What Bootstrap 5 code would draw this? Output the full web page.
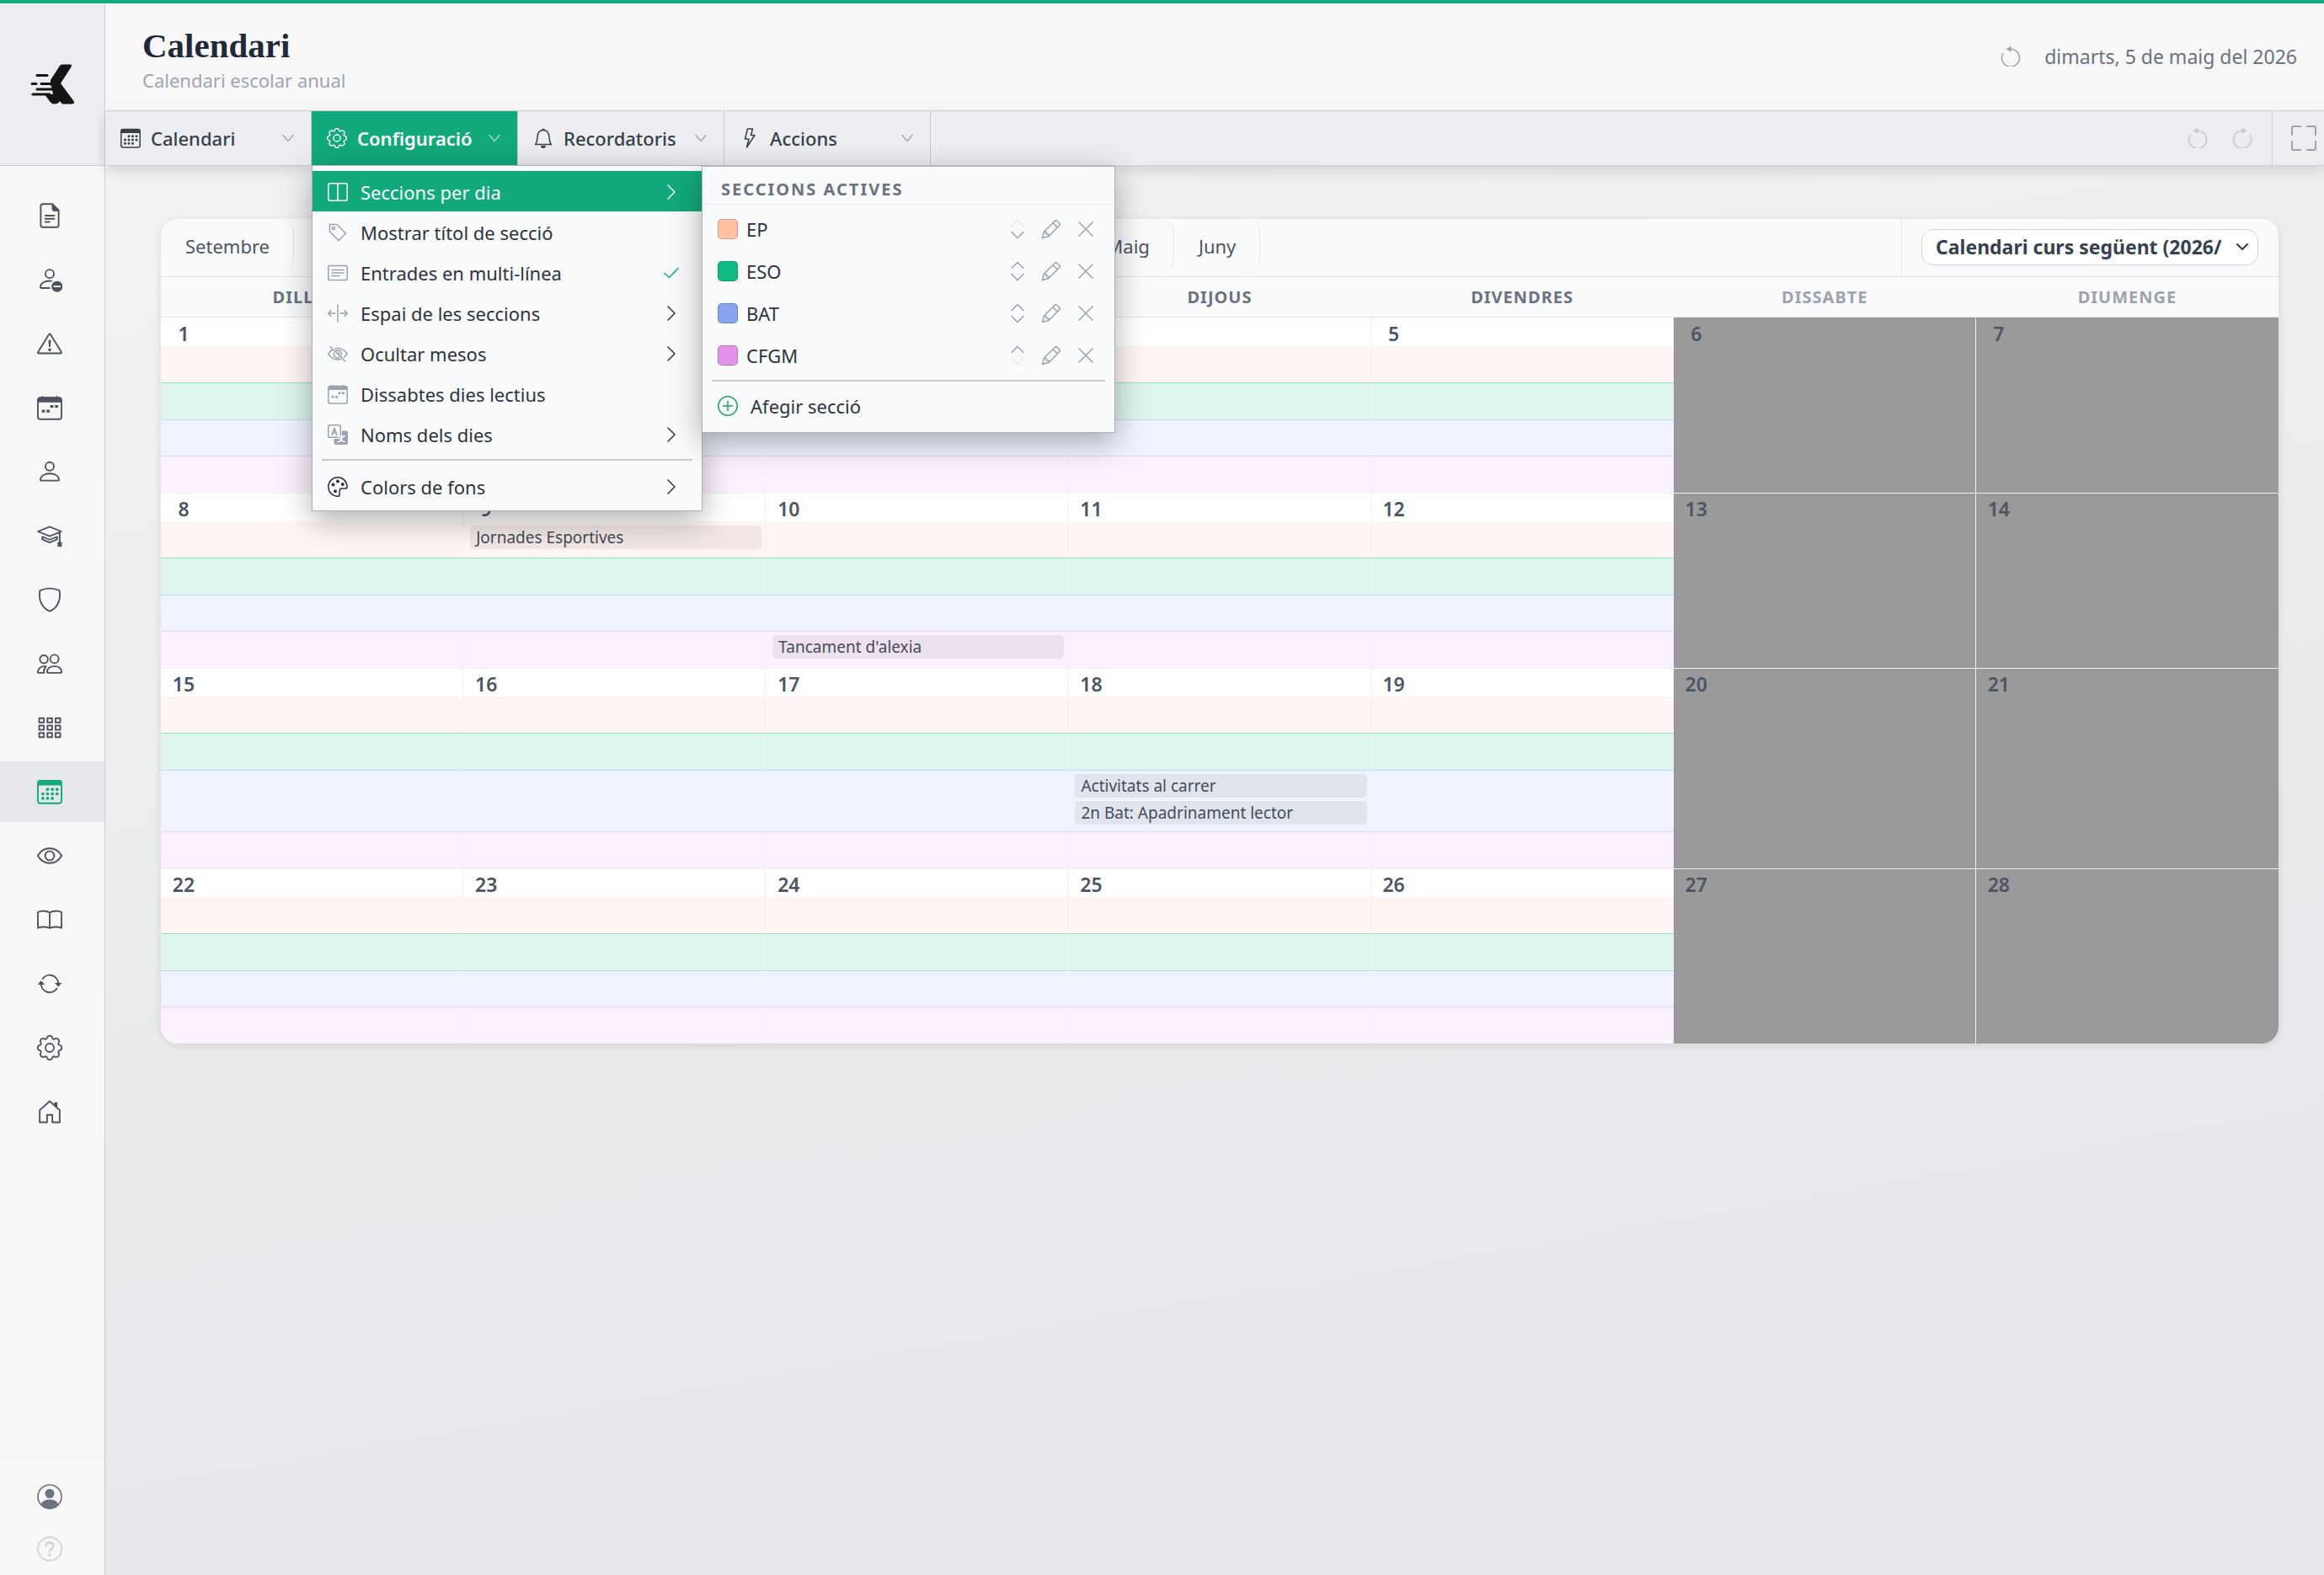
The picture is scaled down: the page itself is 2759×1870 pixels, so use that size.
<!DOCTYPE html>
<html lang="ca">
<head>
<meta charset="utf-8">
<meta name="viewport" content="width=device-width, initial-scale=1">
<title>Calendari</title>
<link href="https://cdn.jsdelivr.net/npm/bootstrap@5.3.0/dist/css/bootstrap.min.css" rel="stylesheet">
<style>
  :root { --brand:#12a97c; --ink:#374151; --line:#cbced4; --panel:#f8fafc; }
  body { font-family:"Noto Sans","Open Sans",sans-serif; font-size:22px; line-height:30px; color:#2f343d; background:#f7f7f7; }
  svg { flex:none; fill:none; stroke:currentColor; stroke-width:1.5; stroke-linecap:round; stroke-linejoin:round; }
  .solid { fill:currentColor; stroke:none; }
  .ico { width:24px; height:24px; }
  .ico-lg { width:30px; height:30px; }
  button { color:inherit; }
  .bare { border:0; background:none; padding:0; line-height:0; }

  .shell { min-height:100vh; border-top:4px solid var(--brand); }
  .rail { width:125px; border-right:1px solid var(--line); background:#f7f7f7; color:#4b5260; }
  .brand-box { height:193px; background:#ecedf0; border-bottom:1px solid var(--line); padding-left:2px; }
  .rail-nav { padding-top:23px; gap:4px; }
  .rail-link { height:72px; padding-right:6px; color:inherit; }
  .rail-link.active { background:#e5e7eb; color:var(--brand); }
  .rail-foot { border-top:1px solid #f1f1f2; padding-top:15px; color:#6b7280; }
  .rail-foot .rail-link { height:62px; }
  .faint { color:#d1d5db; }

  .top-bar { height:127px; padding:0 32px 0 44px; }
  .page-title { padding-top:4px; font:700 41px/48px "Liberation Serif",serif; color:#1f2937; }
  .page-sub { padding-top:2px; color:#a0a5b1; }
  .today { color:#6b7280; font-size:23px; padding-bottom:2px; }

  .tool-bar { height:66px; background:#ecedf1; border:solid var(--line); border-width:1px 0; box-shadow:0 6px 14px rgba(0,0,0,.12); z-index:2; }
  .tool-tab { width:245px; height:64px; padding:0 20px 0 18px; gap:12px; border:0; border-right:1px solid #c7cad0; background:none; font-weight:500; color:#374047; }
  .tool-tab .tail { width:14px; height:14px; color:#9ca3af; stroke-width:1.2; }
  .tool-tab.show { background:var(--brand); color:#fff; font-weight:600; }
  .tool-tab.show .tail { color:#a5dccb; }
  .tool-end { width:62px; border-left:1px solid #c7cad0; color:#9ca3af; padding-left:12px; }

  .flyout { position:absolute; background:var(--panel); border:1px solid #aab0b8; box-shadow:0 10px 34px rgba(0,0,0,.32); color:#2f343d; font-weight:400; }
  .fly-main { top:64px; left:0; width:464px; padding:6px 0 5px; z-index:5; }
  .fly-sub { top:0; left:462px; width:491px; padding:0 0 8px; z-index:6; }
  .fly-item { display:flex; align-items:center; gap:15px; width:100%; height:48px; padding:2px 27px 0 18px; border:0; background:none; text-align:left; }
  .fly-item.on { background:var(--brand); color:#fff; }
  .fly-item .lead-ico { color:#9ca3af; }
  .fly-item.on .lead-ico, .fly-item .dark-ico { color:inherit; }
  .fly-item .tail { width:18px; height:18px; }
  .fly-rule { height:2px; margin:6px 11px; background:#c5cad1; }
  .fly-sub .fly-rule { margin:4px 11px; }
  .fly-head { height:45px; padding:12px 22px 0; border-bottom:1px solid #e5e7eb; font-size:20px; font-weight:700; letter-spacing:2px; line-height:30px; color:#6b7280; text-transform:uppercase; }
  .sec-row { height:50px; padding:0 25px 0 18px; }
  .sec-tools { gap:20px; }
  .swatch { width:24px; height:24px; border-radius:5px; border:1px solid rgba(0,0,0,.18); margin-right:10px; }
  .sec-row .bare { color:#9ca3af; }
  .sec-row .bare:disabled { color:#e5e7eb; }

  .stage { padding:63px 54px 60px 66px; background:linear-gradient(170deg,#f2f2f2 0%,#e9eaec 50%,#e5e7eb 100%); }
  .sheet { border-radius:20px; overflow:hidden; background:#fff; box-shadow:0 2px 10px rgba(0,0,0,.1); }
  .months { height:69px; background:#f9fafc; border-bottom:1px solid #e2e5e9; }
  .month-tab { height:64px; padding:0 28px 0 29px; border:0; border-right:1px solid #e5e7eb; border-radius:0 16px 16px 0; background:none; color:#4b5563; }
  .course { width:448px; border-left:1px solid #e5e7eb; padding:0 24px 2px 23px; }
  .course .form-select { height:43px; border:1px solid #d1d5db; border-radius:14px; padding:0 43px 0 16px; font-size:23px; line-height:30px; font-weight:700; color:var(--ink); background-position:right 10px center; background-size:16px 16px; }

  .cal { width:100%; table-layout:fixed; border-collapse:separate; border-spacing:0; }
  .cal th { height:48px; padding:0; background:#f9fafc; border-bottom:1px solid #e2e5e9; text-align:center; font-size:20px; line-height:30px; font-weight:700; letter-spacing:1px; color:#6b7280; text-transform:uppercase; }
  .cal th.rest { color:#9ca3af; }
  .cal td { padding:0; vertical-align:top; border-right:1px solid #f0f2f5; }
  .cal td:last-child { border-right:0; }
  .daynum { height:34px; font-size:23px; line-height:30px; font-weight:600; color:#4b5563; }
  .daynum span { display:block; width:28px; margin:4px 0 0 13px; text-align:center; }
  .cal .off { background:#9a9a9a; border-right-color:#f0f2f5; }
  .cal tbody + tbody .daynum { border-top:1px solid #eef0f3; }
  .cal tbody + tbody .daynum span { margin-top:3px; }
  .cal .ep, .cal .bat { height:43px; }
  .cal .eso, .cal .cfgm { height:44px; }
  .cal td.band { border-right:1px solid #f0f2f5; }
  .ep { background:#fff6f3; }
  .eso { background:#def5ed; border-top:1px solid #94dfc5; }
  .bat { background:#eef3fe; border-top:1px solid #c9d6f6; }
  .cfgm { background:#fbf0fd; border-top:1px solid #f0cdf3; }
  .cal td.slot { padding:4px 4px 8px 8px; }
  .cal td.ep.slot { padding-top:5px; }
  .entry { height:28px; padding:0 7px; border-radius:5px; background:rgba(75,55,55,.08); font-size:19px; line-height:28px; color:#454b5a; }
  .bat .entry { background:#e0e5ed; }
  .entry + .entry { margin-top:4px; }
</style>
<script src="https://cdn.jsdelivr.net/npm/bootstrap@5.3.0/dist/js/bootstrap.bundle.min.js" defer></script>
</head>
<body>
<svg width="0" height="0" class="position-absolute" aria-hidden="true">
  <symbol id="i-doc" viewBox="0 0 24 24"><path d="M14.500 1H5.500a2 2 0 0 0-2 2v18a2 2 0 0 0 2 2h13a2 2 0 0 0 2-2V7zM7.800 12h8.500M7.800 15h8.500M7.800 18h4"/><path class="solid" d="M14 1v4a3 3 0 0 0 3 3h4z"/></symbol>
  <symbol id="i-userminus" viewBox="0 0 24 24"><circle cx="12" cy="6.500" r="4"/><path d="M13.500 13.300C7 12.700 3.300 15.500 3.200 19c0 .8.300 1 1 1h7.600"/><circle class="solid" cx="19" cy="18.500" r="5.200"/><path stroke="#f7f7f7" d="M16.300 18.500h5.400"/></symbol>
  <symbol id="i-warn" viewBox="0 0 24 24"><path d="M11.300 3.200.900 20c-.3.700 0 1.200.7 1.200h20.800c.7 0 1-.5.700-1.200L12.700 3.200c-.4-.6-1-.6-1.400 0z"/><path class="solid" d="M10.800 8.500h2.400l-.5 6.700h-1.400z"/><circle class="solid" cx="12" cy="17.800" r="1.400"/></symbol>
  <symbol id="i-cal4" viewBox="0 0 24 24"><rect x=".8" y="2.500" width="22.400" height="20.500" rx="2.500"/><path class="solid" d="M.5 7V4.500a2.500 2.500 0 0 1 2.500-2.500h1.500V1h1.500v1h12V1h1.500v1H21a2.500 2.500 0 0 1 2.500 2.500V7zM12.500 9.500h3V12h-3zM17 9.500h3V12h-3zM4.500 14h3v2.500h-3zM9 14h3v2.500H9z"/></symbol>
  <symbol id="i-user" viewBox="0 0 24 24"><circle cx="12" cy="7" r="4"/><path d="M3.200 19.500C3.500 16 7 13.800 12 13.800s8.500 2.200 8.800 5.700c0 .7-.3 1-1 1H4.200c-.7 0-1-.3-1-1z"/></symbol>
  <symbol id="i-grad" viewBox="0 0 24 24"><path d="M.8 8 12 3.500 23 8l-11 4.500zM21.500 9v10M5 13v2.500l7 3 7-3V13l-7 2.800z"/><path class="solid" d="M19.500 18h4v4.500h-4z"/></symbol>
  <symbol id="i-shield" viewBox="0 0 24 24"><path d="M12 1.300c-3 0-6.500.8-9.300 2C1.500 11 3.500 19.500 12 23c8.500-3.500 10.500-12 9.300-19.700-2.800-1.200-6.300-2-9.300-2z"/></symbol>
  <symbol id="i-users" viewBox="0 0 24 24"><circle cx="16.500" cy="7.500" r="4"/><circle cx="6.500" cy="7.800" r="3.800"/><path d="M9.500 20c.2-3.500 3-5.500 7-5.500s6.700 2 6.800 5.500c0 .5-.3.700-.8.700H10.300c-.5 0-.8-.2-.8-.7zM8.500 14.600C3.500 14 .8 16.500.7 20c0 .5.300.7.800.7h5c-.3-2.500.3-4.500 2-6.100z"/></symbol>
  <symbol id="i-grid" viewBox="0 0 24 24"><path d="M2 3h4.500v4H2zM9.800 3h4.500v4H9.800zM17.500 3H22v4h-4.500zM2 10h4.500v4H2zM9.800 10h4.500v4H9.800zM17.500 10H22v4h-4.500zM2 17h4.500v4H2zM9.800 17h4.500v4H9.800zM17.500 17H22v4h-4.500z"/></symbol>
  <symbol id="i-cal11" viewBox="0 0 24 24"><rect x=".8" y="1.500" width="22.400" height="21.500" rx="2.500"/><path class="solid" d="M.5 6V3.500A2.500 2.500 0 0 1 3 1h18a2.500 2.500 0 0 1 2.500 2.500V6z"/><path stroke-width="3" d="M10 9.700h0M14.500 9.700h0M19 9.700h0M5.500 14h0M10 14h0M14.500 14h0M19 14h0M5.500 18.300h0M10 18.300h0M14.500 18.300h0"/></symbol>
  <symbol id="i-eye" viewBox="0 0 24 24"><path d="M.7 12C3 8 7 5 12 5s9 3 11.300 7C21 16 17 19 12 19S3 16 .7 12z"/><circle cx="12" cy="12" r="4.300"/></symbol>
  <symbol id="i-book" viewBox="0 0 24 24"><path d="M12 5.200C9.500 3.500 4.500 3.200.8 4.800v15c3.700-1.500 8.700-1.300 11.200.2 2.500-1.500 7.500-1.700 11.200-.2v-15C19.500 3.200 14.500 3.500 12 5.200zM12 5.200V20"/></symbol>
  <symbol id="i-sync" viewBox="0 0 24 24"><path d="M5.300 7.300A8.200 8.200 0 0 1 20.200 12M18.700 16.700A8.200 8.200 0 0 1 3.800 12"/><path class="solid" d="M16.800 11.200h6.700L20.200 15zM.5 12.800h6.700L3.800 9z"/></symbol>
  <symbol id="i-gear" viewBox="-.4 -.4 16.800 16.800"><circle cx="8" cy="8" r="2.800" stroke-width="1"/><path stroke-width="1" d="M9.796 1.343c-.527-1.790-3.065-1.790-3.592 0l-.094.319a.873.873 0 0 1-1.255.520l-.292-.160c-1.640-.892-3.433.902-2.540 2.541l.159.292a.873.873 0 0 1-.520 1.255l-.319.094c-1.790.527-1.790 3.065 0 3.592l.319.094a.873.873 0 0 1 .520 1.255l-.160.292c-.892 1.640.901 3.434 2.541 2.540l.292-.159a.873.873 0 0 1 1.255.520l.094.319c.527 1.790 3.065 1.790 3.592 0l.094-.319a.873.873 0 0 1 1.255-.520l.292.160c1.640.893 3.434-.902 2.540-2.541l-.159-.292a.873.873 0 0 1 .520-1.255l.319-.094c1.790-.527 1.790-3.065 0-3.592l-.319-.094a.873.873 0 0 1-.520-1.255l.160-.292c.893-1.640-.902-3.433-2.541-2.540l-.292.159a.873.873 0 0 1-1.255-.520z"/></symbol>
  <symbol id="i-home" viewBox="0 0 24 24"><path d="M2.500 10.500 12 2l9.500 8.500V22h-7v-7h-5v7h-7z"/><path class="solid" d="M16.300 3h3v6l-3-2.800z"/></symbol>
  <symbol id="i-account" viewBox="0 0 24 24"><circle cx="12" cy="12" r="11.200" stroke-width="1.300"/><circle class="solid" cx="12" cy="9" r="4.400"/><path class="solid" d="M3.300 19.500C5 16 8 14.700 12 14.700s7 1.300 8.700 4.800A11.300 11.300 0 0 1 12 23.500a11.300 11.300 0 0 1-8.700-4z"/></symbol>
  <symbol id="i-help" viewBox="0 0 24 24"><circle cx="12" cy="12" r="11.200"/><path stroke-width="2" d="M8.500 8.800C8.700 6.900 10 6 12 6s3.500 1 3.500 3c0 2.500-3.300 2.400-3.300 5.200"/><circle class="solid" cx="12" cy="17.700" r="1.500"/></symbol>
  <symbol id="i-bell" viewBox="0 0 24 24"><path d="M2.500 19.500h19c-2-2-2-4-2.500-9C18.600 5.500 16 2.500 12 2.500s-6.600 3-7 8c-.5 5-.5 7-2.500 9z"/><path class="solid" d="M9 21h6a3 3 0 0 1-6 0zM10.500 2a1.500 1.500 0 0 1 3 0z"/></symbol>
  <symbol id="i-bolt" viewBox="0 0 24 24"><path d="M9.500 1h6L13.500 8.500h4.500L8.500 23l2.500-10H6.500z"/></symbol>
  <symbol id="i-down" viewBox="0 0 14 14"><path d="M1 3.500 7 10.500 13 3.500"/></symbol>
  <symbol id="i-right" viewBox="0 0 18 18"><path d="M5 1 13 9 5 17"/></symbol>
  <symbol id="i-check" viewBox="0 0 18 18"><path d="M1 9.500 6.500 14.500 17 3.500"/></symbol>
  <symbol id="i-columns" viewBox="0 0 24 24"><rect x=".8" y="1.800" width="22.400" height="20.400" rx="2"/><path d="M12 2v20"/></symbol>
  <symbol id="i-tag" viewBox="0 0 24 24"><path d="M2.500 2.500h8.500L21.500 13 13 21.500 2.500 11z"/><circle cx="7" cy="7" r="1.600"/></symbol>
  <symbol id="i-text" viewBox="0 0 24 24"><rect x=".8" y="3.500" width="22.400" height="17" rx="1.500"/><path d="M5 8.500h14M5 12h14M5 15.500h9"/></symbol>
  <symbol id="i-split" viewBox="0 0 24 24"><path d="M12 2v20M9 12H1M4 8.500.8 12 4 15.500M15 12h8M20 8.500l3.200 3.500-3.200 3.500"/></symbol>
  <symbol id="i-hide" viewBox="0 0 24 24"><path d="M3 3.500 21 21M.8 12.500C2 10 4 8 6 7M9 5.800c6-1.300 11.500 2 14.200 6.200-1 1.700-2.200 3-3.700 4M16 18.400C10 20.200 4 17.500.8 12.500M10 8.500a4.300 4.300 0 0 1 6 5.500M7.800 11a4.300 4.300 0 0 0 5.800 5.500M12.500 11a1.500 1.500 0 0 1 1.300 1.500"/></symbol>
  <symbol id="i-lang" viewBox="0 0 24 24"><rect x=".8" y=".8" width="14.500" height="14.500" rx="1.800"/><path d="M5.300 12 8 4.500 10.700 12M6.200 9.700h3.600" stroke-width="1.800"/><path class="solid" d="M17 7.500h4.500A2.500 2.500 0 0 1 24 10v11.500a2.500 2.500 0 0 1-2.500 2.500H10a2.500 2.500 0 0 1-2.500-2.500V17H15a2 2 0 0 0 2-2z"/><path stroke="#f8fafc" d="M12 20.500c3 0 5.500-2.500 6-6.500M14 14h6.500M14 16c1 2.500 3 4 6 4.500"/></symbol>
  <symbol id="i-palette" viewBox="0 0 24 24"><path d="M12 .8C5.800.8.800 5.800.8 12s5 11.200 11.200 11.200c1.500 0 2.200-.8 2.200-2.200v-4.500c0-1.600.8-2.500 2.500-2.500h4c1.700 0 2.500-.9 2.400-2.300C22.700 5.300 18 .8 12 .8z"/><path stroke-width="4" d="M12 5.500h0M6.500 9.500h0M17.800 9h0M9 17.200h0"/></symbol>
  <symbol id="i-pencil" viewBox="0 0 24 24"><path d="M1.500 22.500 3.500 15 16.500 2.200c.8-.8 1.500-.8 2.300 0l3 3c.8.800.8 1.500 0 2.300L9 20.500zM14 4.700l5.300 5.300M3.500 15l2.500.5.5 2.500 2.500.3V20.500"/></symbol>
  <symbol id="i-x" viewBox="0 0 18 18"><path d="M1 1 17 17M17 1 1 17"/></symbol>
  <symbol id="i-plus" viewBox="0 0 24 24"><circle cx="12" cy="12" r="11.200"/><path d="M12 6.500v11M6.500 12h11"/></symbol>
  <symbol id="i-undo" viewBox="0 0 24 24"><path d="M2.900 8.500A10.500 10.500 0 1 0 12 3.200"/><path class="solid" d="M12.500-.3v7L6.500 3.200z"/></symbol>
  <symbol id="i-full" viewBox="0 0 30 30"><path stroke-width="2" d="M1 11V2.500Q1 1 2.500 1H11M19 1h8.500Q29 1 29 2.500V11M29 19v8.500q0 1.500-1.500 1.500H19M11 29H2.500Q1 29 1 27.500V19"/></symbol>
</svg>

<div class="shell d-flex">
  <aside class="rail d-flex flex-column flex-shrink-0">
    <a href="#" class="brand-box d-flex align-items-center justify-content-center" aria-label="Inici">
      <svg width="54" height="50" viewBox="36 75 54 50" style="color:#151515"><path class="solid" d="M71 78q1-1.500 3-1.500h9q3 0 1.500 3L72 99l15.500 21q1.500 3-1.500 3.500H75q-2 0-4-3.500-2 3.500-6.500 3.500-3 0-5-2.500L53 112h10l-3-10V95z"/><path stroke-width="3" d="M44 89.500h12M38 99.500h5M49 99.500h14M44 106h18M39 112h20"/><path stroke="#ecedf0" stroke-width="1.500" d="M44 103h17M44 109h18"/></svg>
    </a>
    <nav class="rail-nav d-flex flex-column" id="rail"></nav>
    <div class="rail-foot mt-auto">
      <a href="#" class="rail-link d-flex align-items-center justify-content-center" aria-label="Compte"><svg class="ico-lg"><use href="#i-account"/></svg></a>
      <a href="#" class="rail-link faint d-flex align-items-center justify-content-center" aria-label="Ajuda"><svg class="ico-lg"><use href="#i-help"/></svg></a>
    </div>
  </aside>

  <div class="d-flex flex-column flex-grow-1">
    <header class="top-bar d-flex align-items-center justify-content-between">
      <div>
        <h1 class="page-title m-0">Calendari</h1>
        <div class="page-sub">Calendari escolar anual</div>
      </div>
      <div class="today d-flex align-items-center gap-4">
        <button class="bare me-1" type="button" aria-label="Actualitza"><svg class="ico" style="color:#9ca3af"><use href="#i-undo"/></svg></button>
        <span>dimarts, 5 de maig del 2026</span>
      </div>
    </header>

    <div class="tool-bar d-flex position-relative">
      <button class="tool-tab d-flex align-items-center" type="button"><svg class="ico"><use href="#i-cal11"/></svg>Calendari<svg class="tail ms-auto"><use href="#i-down"/></svg></button>
      <div class="position-relative">
        <button class="tool-tab show d-flex align-items-center" type="button" aria-expanded="true"><svg class="ico"><use href="#i-gear"/></svg>Configuració<svg class="tail ms-auto"><use href="#i-down"/></svg></button>
        <div class="flyout fly-main">
          <button class="fly-item on" type="button"><svg class="ico lead-ico"><use href="#i-columns"/></svg>Seccions per dia<svg class="tail ms-auto"><use href="#i-right"/></svg></button>
          <button class="fly-item" type="button"><svg class="ico lead-ico"><use href="#i-tag"/></svg>Mostrar títol de secció</button>
          <button class="fly-item" type="button"><svg class="ico lead-ico"><use href="#i-text"/></svg>Entrades en multi-línea<svg class="tail ms-auto" style="color:#12a97c"><use href="#i-check"/></svg></button>
          <button class="fly-item" type="button"><svg class="ico lead-ico"><use href="#i-split"/></svg>Espai de les seccions<svg class="tail ms-auto"><use href="#i-right"/></svg></button>
          <button class="fly-item" type="button"><svg class="ico lead-ico"><use href="#i-hide"/></svg>Ocultar mesos<svg class="tail ms-auto"><use href="#i-right"/></svg></button>
          <button class="fly-item" type="button"><svg class="ico lead-ico"><use href="#i-cal4"/></svg>Dissabtes dies lectius</button>
          <button class="fly-item" type="button"><svg class="ico lead-ico"><use href="#i-lang"/></svg>Noms dels dies<svg class="tail ms-auto"><use href="#i-right"/></svg></button>
          <div class="fly-rule"></div>
          <button class="fly-item" type="button"><svg class="ico dark-ico"><use href="#i-palette"/></svg>Colors de fons<svg class="tail ms-auto"><use href="#i-right"/></svg></button>
          <div class="flyout fly-sub">
            <div class="fly-head">Seccions actives</div>
            <div class="pt-1" id="sections"></div>
            <div class="fly-rule"></div>
            <button class="fly-item" type="button"><svg class="ico" style="color:#22a559"><use href="#i-plus"/></svg>Afegir secció</button>
          </div>
        </div>
      </div>
      <button class="tool-tab d-flex align-items-center" type="button"><svg class="ico"><use href="#i-bell"/></svg>Recordatoris<svg class="tail ms-auto"><use href="#i-down"/></svg></button>
      <button class="tool-tab d-flex align-items-center" type="button"><svg class="ico"><use href="#i-bolt"/></svg>Accions<svg class="tail ms-auto"><use href="#i-down"/></svg></button>
      <div class="ms-auto d-flex align-items-center">
        <div class="d-flex" style="gap:29px;padding-right:23px;color:#c5c9d0">
          <button class="bare" type="button" disabled aria-label="Desfés"><svg class="ico"><use href="#i-undo"/></svg></button>
          <button class="bare" type="button" disabled aria-label="Refés"><svg class="ico" viewBox="0 0 24 24"><g transform="matrix(-1 0 0 1 24 0)"><use href="#i-undo"/></g></svg></button>
        </div>
        <div class="tool-end h-100 d-flex align-items-center justify-content-center"><button class="bare" type="button" aria-label="Pantalla completa"><svg class="ico-lg"><use href="#i-full"/></svg></button></div>
      </div>
    </div>

    <main class="stage flex-grow-1">
      <section class="sheet">
        <div class="months d-flex" id="months">
          <div class="course ms-auto d-flex align-items-center">
            <select class="form-select" aria-label="Curs"><option>Calendari curs següent (2026/2027)</option><option>Calendari curs actual (2025/2026)</option></select>
          </div>
        </div>
        <table class="cal" id="cal">
          <thead><tr><th>Dilluns</th><th>Dimarts</th><th>Dimecres</th><th>Dijous</th><th>Divendres</th><th class="rest">Dissabte</th><th class="rest">Diumenge</th></tr></thead>
        </table>
      </section>
    </main>
  </div>
</div>

<script>
  const use = (id, cls) => `<svg class="${cls}"><use href="#i-${id}"/></svg>`;

  const rail = [["doc","Documents"],["userminus","Absències"],["warn","Incidències"],["cal4","Agenda"],["user","Persona"],["grad","Alumnes"],["shield","Seguretat"],["users","Grups"],["grid","Aules"],["cal11","Calendari"],["eye","Vista"],["book","Llibres"],["sync","Sincronitza"],["gear","Configuració"],["home","Inici"]];
  document.getElementById("rail").innerHTML = rail.map(([id, label]) =>
    `<a href="#" class="rail-link d-flex align-items-center justify-content-center${label === "Calendari" ? " active" : ""}" aria-label="${label}">${use(id, "ico-lg")}</a>`).join("");

  const sections = [["EP","#ffc0a3"],["ESO","#12b981"],["BAT","#87a4ed"],["CFGM","#e392ea"]];
  document.getElementById("sections").innerHTML = sections.map(([name, color], i) =>
    `<div class="sec-row d-flex align-items-center"><span class="swatch" style="background:${color}"></span><span class="me-auto">${name}</span>
      <span class="sec-tools d-flex align-items-center">
      <span class="d-flex flex-column gap-1">
        <button class="bare" type="button" aria-label="Puja" ${i === 0 ? "disabled" : ""}><svg width="16" height="10" viewBox="0 0 16 10"><path d="M1 8.500 8 1.500l7 7"/></svg></button>
        <button class="bare" type="button" aria-label="Baixa" ${i === 3 ? "disabled" : ""}><svg width="16" height="10" viewBox="0 0 16 10"><path d="M1 1.500l7 7 7-7"/></svg></button>
      </span>
      <button class="bare" type="button" aria-label="Edita">${use("pencil", "ico")}</button>
      <button class="bare" type="button" aria-label="Elimina"><svg width="18" height="18"><use href="#i-x"/></svg></button></span></div>`).join("");

  const months = ["Setembre","Octubre","Novembre","Desembre","Gener","Febrer","Març","Abril","Maig","Juny"];
  document.getElementById("months").insertAdjacentHTML("afterbegin",
    months.map(m => `<button class="month-tab" type="button">${m}</button>`).join(""));

  const entries = { "9-ep":["Jornades Esportives"], "10-cfgm":["Tancament d'alexia"], "18-bat":["Activitats al carrer","2n Bat: Apadrinament lector"] };
  const bands = ["ep","eso","bat","cfgm"];
  document.getElementById("cal").insertAdjacentHTML("beforeend", [1, 8, 15, 22].map(first => {
    const days = [0,1,2,3,4,5,6].map(n => first + n);
    const head = days.map((d, n) => `<td class="daynum${n > 4 ? " off" : ""}"${n > 4 ? ' rowspan="5"' : ""}><span>${d}</span></td>`).join("");
    const rows = bands.map(b => "<tr>" + days.slice(0, 5).map(d => {
      const list = entries[d + "-" + b] || [];
      return `<td class="band ${b}${list.length ? " slot" : ""}">${list.map(t => `<div class="entry">${t}</div>`).join("")}</td>`;
    }).join("") + "</tr>").join("");
    return `<tbody><tr>${head}</tr>${rows}</tbody>`;
  }).join(""));
</script>
</body>
</html>
